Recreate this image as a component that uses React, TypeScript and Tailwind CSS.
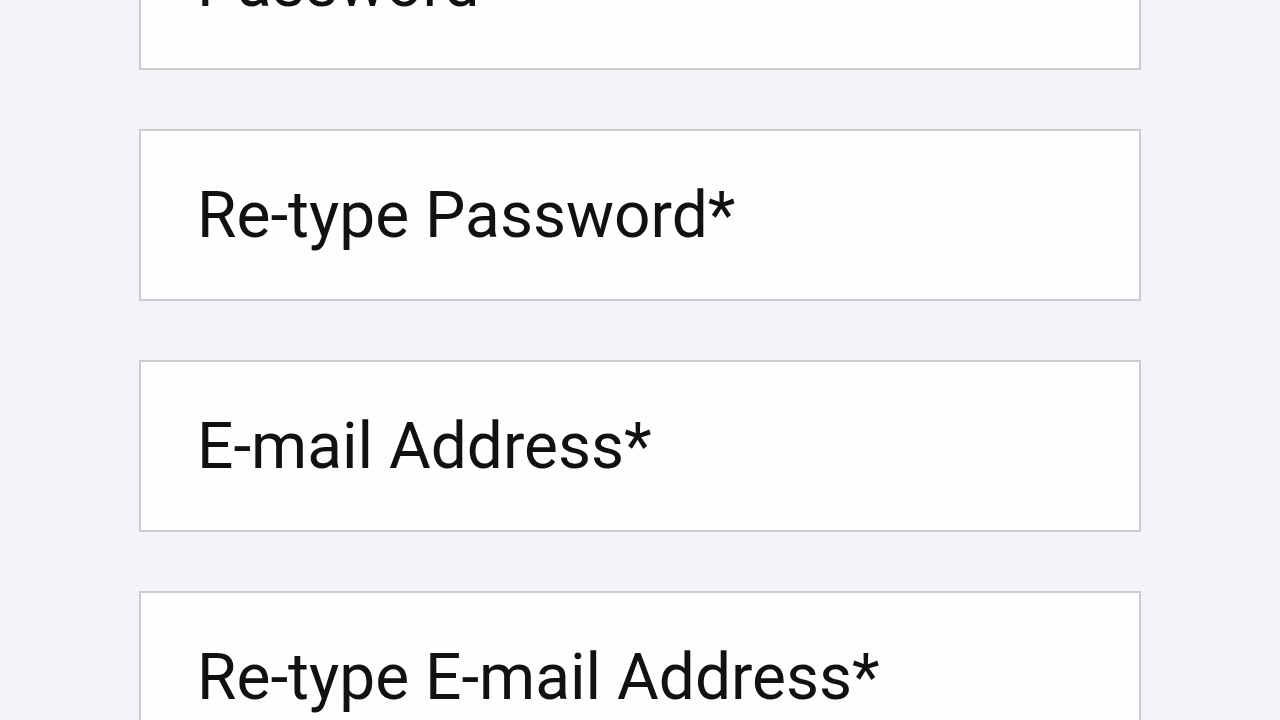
const fields = ["Password", "Re-type Password*", "E-mail Address*", "Re-type E-mail Address*"];

export default function App() {
  return (
    <div className="h-[720px] w-[1280px] overflow-hidden bg-[#f3f4f8]">
      <div className="-mt-[102px] flex flex-col gap-[59px] px-[139px]">
        {fields.map((f) => (
          <div
            key={f}
            className="flex h-[172px] items-center border-2 border-[#cdcdd1] bg-[#fefefe] pl-[56px] font-['Roboto',sans-serif] text-[64px] text-[#111]"
          >
            <span className="mt-[2px]">{f}</span>
          </div>
        ))}
      </div>
    </div>
  );
}
